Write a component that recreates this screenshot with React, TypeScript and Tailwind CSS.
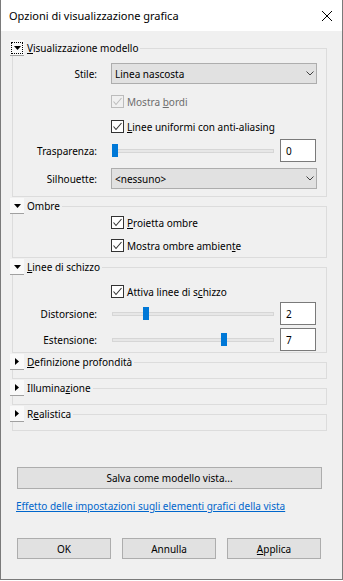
import type { ReactNode } from "react";

function Triangle({ open }: { open: boolean }) {
  return open ? (
    <svg width="7" height="4" viewBox="0 0 7 4">
      <polygon points="0,0 7,0 3.5,4" fill="#000" />
    </svg>
  ) : (
    <svg width="4" height="7" viewBox="0 0 4 7">
      <polygon points="0,0 4,3.5 0,7" fill="#000" />
    </svg>
  );
}

function Expander({ open, focus }: { open: boolean; focus?: boolean }) {
  return (
    <div className="flex h-[16px] w-[14px] shrink-0 items-center justify-center border-b border-[#a0a0a0] bg-[#f9f9f9]">
      {focus ? (
        <div className="flex h-[12px] w-[12px] items-center justify-center border border-dotted border-black">
          <Triangle open={open} />
        </div>
      ) : (
        <Triangle open={open} />
      )}
    </div>
  );
}

function Group({
  title,
  open,
  focus,
  children,
  bodyClass,
}: {
  title: ReactNode;
  open: boolean;
  focus?: boolean;
  children?: ReactNode;
  bodyClass: string;
}) {
  return (
    <div className="mt-[1px]">
      <div className="flex h-[16px]">
        <Expander open={open} focus={focus} />
        <span className="ml-[3px] self-center leading-[16px]">{title}</span>
        <div className="ml-[2px] mt-[8px] flex-1 border-r border-t border-[#dcdcdc]" />
      </div>
      <div className={`ml-[2px] border-x border-b border-[#dcdcdc] ${bodyClass}`}>{children}</div>
    </div>
  );
}

function Check({ disabled }: { disabled?: boolean }) {
  const c = disabled ? "#bcbcbc" : "#333333";
  return (
    <span
      className={`flex h-[13px] w-[13px] shrink-0 items-center justify-center border ${
        disabled ? "border-[#bcbcbc] bg-[#f0f0f0]" : "border-[#333333] bg-white"
      }`}
    >
      <svg width="11" height="11" viewBox="0 0 11 11">
        <path d="M1.5 5.5 L4 8.5 L9.5 2" fill="none" stroke={c} strokeWidth="1.1" />
      </svg>
    </span>
  );
}

function CheckRow({ children, disabled, className }: { children: ReactNode; disabled?: boolean; className: string }) {
  return (
    <div className={`ml-[98px] flex h-[13px] items-center ${className}`}>
      <Check disabled={disabled} />
      <span className={`ml-[3px] leading-[16px] ${disabled ? "text-[#6d6d6d]" : ""}`}>{children}</span>
    </div>
  );
}

function Label({ children }: { children: ReactNode }) {
  return <span className="w-[84px] shrink-0 text-right leading-[16px]">{children}</span>;
}

function Select({ value }: { value: string }) {
  return (
    <div className="ml-[14px] flex h-[21px] w-[206px] items-center justify-between border border-[#adadad] bg-[#e1e1e1] pl-[3px] pr-[2px]">
      <span className="leading-[16px]">{value}</span>
      <svg width="8" height="5" viewBox="0 0 8 5">
        <path d="M0.5 0.5 L4 4 L7.5 0.5" fill="none" stroke="#404040" strokeWidth="1" />
      </svg>
    </div>
  );
}

function Slider({ value }: { value: number }) {
  return (
    <div className="relative ml-[15px] flex h-[23px] w-[162px] items-center">
      <div className="h-[4px] w-full border border-[#d6d6d6] bg-[#e7e7e7]" />
      <div
        className="absolute top-[5px] h-[13px] w-[6px] bg-[#0078d7]"
        style={{ left: Math.round((value / 10) * 155) }}
      />
    </div>
  );
}

function NumBox({ value }: { value: string }) {
  return (
    <div className="ml-[6px] flex h-[23px] w-[36px] items-center border border-[#7a7a7a] bg-white pl-[5px] leading-[16px]">
      {value}
    </div>
  );
}

function Button({ children, className }: { children: ReactNode; className: string }) {
  return (
    <div
      className={`flex items-center justify-center border border-[#adadad] bg-[#e1e1e1] leading-[16px] ${className}`}
    >
      {children}
    </div>
  );
}

export default function App() {
  return (
    <div className="h-[581px] w-[343px] bg-white font-['Noto_Sans',sans-serif] text-[10px] text-black">
      <div className="flex h-[580px] w-[343px] flex-col border-x border-b border-[#7a7a7a] bg-[#f0f0f0]">
        <div className="flex h-[31px] shrink-0 items-center justify-between bg-white pl-[8px] pr-[10px]">
          <span className="text-[11px] leading-[16px]">Opzioni di visualizzazione grafica</span>
          <svg width="10" height="10" viewBox="0 0 10 10">
            <path d="M0 0 L10 10 M10 0 L0 10" stroke="#000" strokeWidth="1" />
          </svg>
        </div>

        <div className="flex flex-col pl-[9px] pr-[15px] pt-[8px]">
          <Group
            open
            focus
            title={
              <>
                <u>V</u>isualizzazione modello
              </>
            }
            bodyClass="pt-[7px] pb-[7px]"
          >
            <div className="flex items-center">
              <Label>Stile:</Label>
              <Select value="Linea nascosta" />
            </div>
            <CheckRow disabled className="mt-[11px]">
              Mostra <u>b</u>ordi
            </CheckRow>
            <CheckRow className="mt-[12px]">
              <u>L</u>inee uniformi con anti-aliasing
            </CheckRow>
            <div className="mt-[6px] flex items-center">
              <Label>Trasparenza:</Label>
              <Slider value={0} />
              <NumBox value="0" />
            </div>
            <div className="mt-[6px] flex items-center">
              <Label>Silhouette:</Label>
              <Select value="<nessuno>" />
            </div>
          </Group>

          <Group open title="Ombre" bodyClass="pt-[2px] pb-[5px]">
            <CheckRow className="">
              <u>P</u>roietta ombre
            </CheckRow>
            <CheckRow className="mt-[10px]">
              Mostra ombre ambien<u>t</u>e
            </CheckRow>
          </Group>

          <Group
            open
            title={
              <>
                <u>L</u>inee di schizzo
              </>
            }
            bodyClass="pt-[10px] pb-[1px]"
          >
            <CheckRow className="">
              Attiva linee di s<u>c</u>hizzo
            </CheckRow>
            <div className="mt-[4px] flex items-center">
              <Label>Distorsione:</Label>
              <Slider value={2} />
              <NumBox value="2" />
            </div>
            <div className="mt-[3px] flex items-center">
              <Label>Estensione:</Label>
              <Slider value={7} />
              <NumBox value="7" />
            </div>
          </Group>

          <Group
            open={false}
            title={
              <>
                <u>D</u>efinizione profondità
              </>
            }
            bodyClass="h-[9px]"
          />
          <Group
            open={false}
            title={
              <>
                Illumina<u>z</u>ione
              </>
            }
            bodyClass="h-[9px]"
          />
          <Group
            open={false}
            title={
              <>
                R<u>e</u>alistica
              </>
            }
            bodyClass="h-[9px]"
          />

          <Button className="ml-[7px] mt-[36px] h-[22px] w-[305px]">Salva come modello vista...</Button>

          <a className="ml-[6px] mt-[9px] leading-[16px] text-[#0066cc] underline">
            Effetto delle impostazioni sugli elementi grafici della vista
          </a>

          <div className="ml-[7px] mt-[24px] flex gap-[11px]">
            <Button className="h-[21px] w-[94px]">OK</Button>
            <Button className="h-[21px] w-[94px]">Annulla</Button>
            <Button className="h-[21px] w-[94px]">
              <span>
                <u>A</u>pplica
              </span>
            </Button>
          </div>
        </div>
      </div>
    </div>
  );
}
